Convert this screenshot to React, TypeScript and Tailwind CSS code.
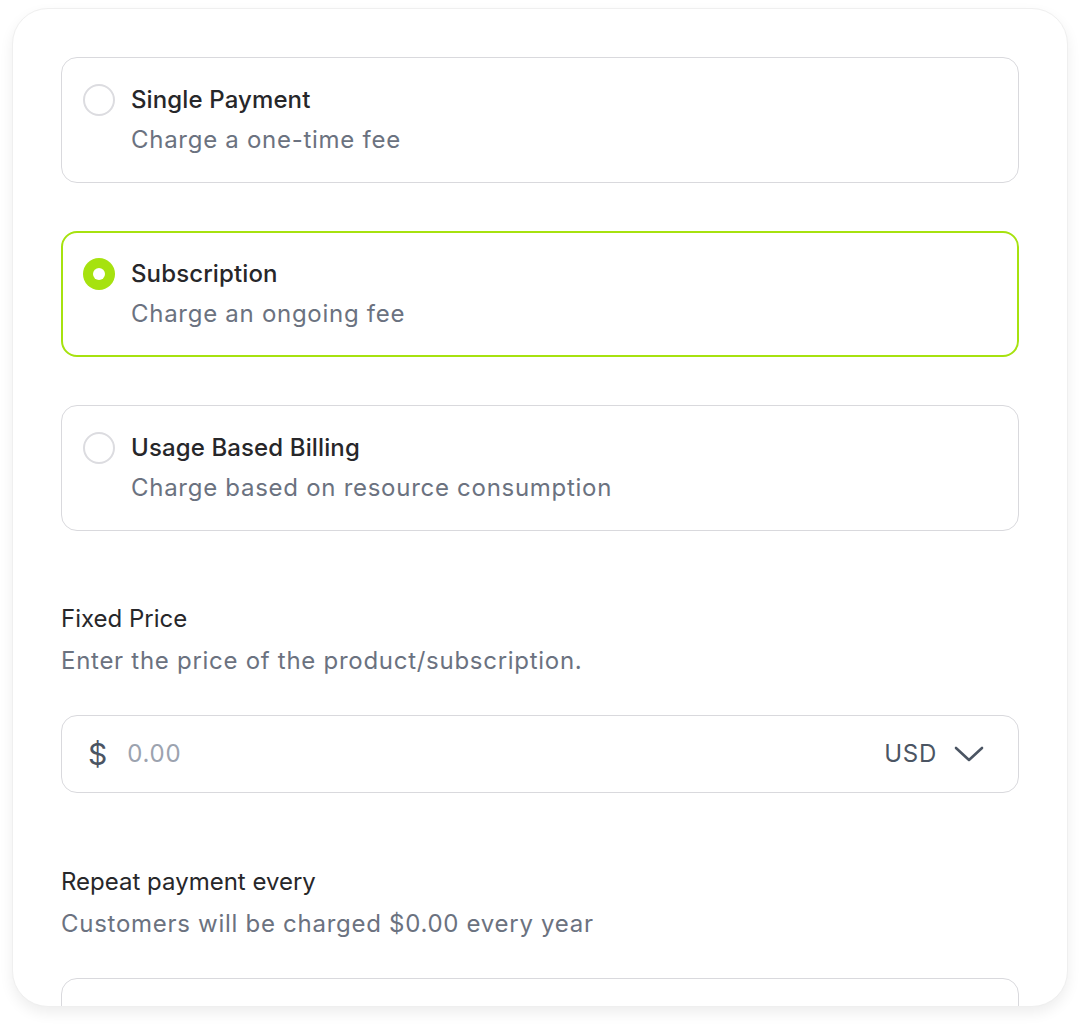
import { useState } from 'react';

type Plan = {
  id: string;
  title: string;
  description: string;
};

const plans: Plan[] = [
  { id: 'single', title: 'Single Payment', description: 'Charge a one-time fee' },
  { id: 'subscription', title: 'Subscription', description: 'Charge an ongoing fee' },
  { id: 'usage', title: 'Usage Based Billing', description: 'Charge based on resource consumption' },
];

function Chevron() {
  return (
    <svg width="30" height="18" viewBox="0 0 30 18" fill="none" className="text-[#4b5563]">
      <polyline points="2,3 15,15 28,3" stroke="currentColor" strokeWidth="2.6" strokeLinecap="round" strokeLinejoin="round" />
    </svg>
  );
}

function PlanOption({ plan, selected, onSelect }: { plan: Plan; selected: boolean; onSelect: () => void }) {
  return (
    <button
      type="button"
      onClick={onSelect}
      className={`flex w-full items-start gap-4 rounded-2xl bg-white text-left ${
        selected ? 'border-2 border-[#a6e20f] py-[23px] pr-[23px] pl-[20px]' : 'border border-[#d9d9dd] py-6 pr-6 pl-[21px]'
      }`}
    >
      {/* radio */}
      {selected ? (
        <span className="mt-[2px] flex h-8 w-8 shrink-0 items-center justify-center rounded-full bg-[#a6e20f]">
          <span className="h-3 w-3 rounded-full bg-white" />
        </span>
      ) : (
        <span className="mt-[2px] h-8 w-8 shrink-0 rounded-full border-2 border-[#dcdce0] bg-white" />
      )}
      <span className="flex flex-col">
        <span className="text-2xl leading-9 font-medium tracking-[0.005em] text-[#27272a]">{plan.title}</span>
        <span className="mt-1 text-2xl leading-9 tracking-[0.03em] text-[#6b7280]">{plan.description}</span>
      </span>
    </button>
  );
}

export default function App() {
  const [selected, setSelected] = useState('subscription');

  return (
    <div className="min-h-screen bg-white px-3 pt-2" style={{ fontFamily: 'Inter, "Noto Sans", sans-serif' }}>
      <div className="h-[999px] w-[1056px] overflow-hidden rounded-[36px] border border-[#efefef] bg-white px-12 pt-12 shadow-[0_6px_14px_rgba(0,0,0,0.07)]">
        <div className="flex flex-col gap-12">
          {plans.map((plan) => (
            <PlanOption key={plan.id} plan={plan} selected={selected === plan.id} onSelect={() => setSelected(plan.id)} />
          ))}
        </div>

        {/* Fixed price */}
        <div className="mt-[70px]">
          <p className="text-2xl leading-9 text-[#27272a]">Fixed Price</p>
          <p className="mt-[6px] text-2xl leading-9 tracking-[0.03em] text-[#6b7280]">Enter the price of the product/subscription.</p>
          <div className="mt-9 flex h-[78px] items-center rounded-2xl border border-[#d9d9dd] bg-white pl-[26px] pr-[34px]">
            <span className="text-[30px] leading-none text-[#4b5563]">$</span>
            <span className="ml-[20px] text-2xl tracking-[0.03em] text-[#9ca3af]">0.00</span>
            <div className="ml-auto flex items-center gap-[17px]">
              <span className="text-2xl tracking-[0.03em] text-[#4b5563]">USD</span>
              <Chevron />
            </div>
          </div>
        </div>

        {/* Repeat payment */}
        <div className="mt-[71px]">
          <p className="text-2xl leading-9 text-[#27272a]">Repeat payment every</p>
          <p className="mt-[6px] text-2xl leading-9 tracking-[0.03em] text-[#6b7280]">Customers will be charged $0.00 every year</p>
          <div className="mt-9 flex h-[78px] items-center rounded-2xl border border-[#d9d9dd] bg-white pl-[26px] pr-[34px]">
            <span className="text-2xl text-[#27272a]">1</span>
            <div className="ml-auto flex items-center gap-[17px]">
              <span className="text-2xl tracking-[0.03em] text-[#4b5563]">Year</span>
              <Chevron />
            </div>
          </div>
        </div>
      </div>
    </div>
  );
}
